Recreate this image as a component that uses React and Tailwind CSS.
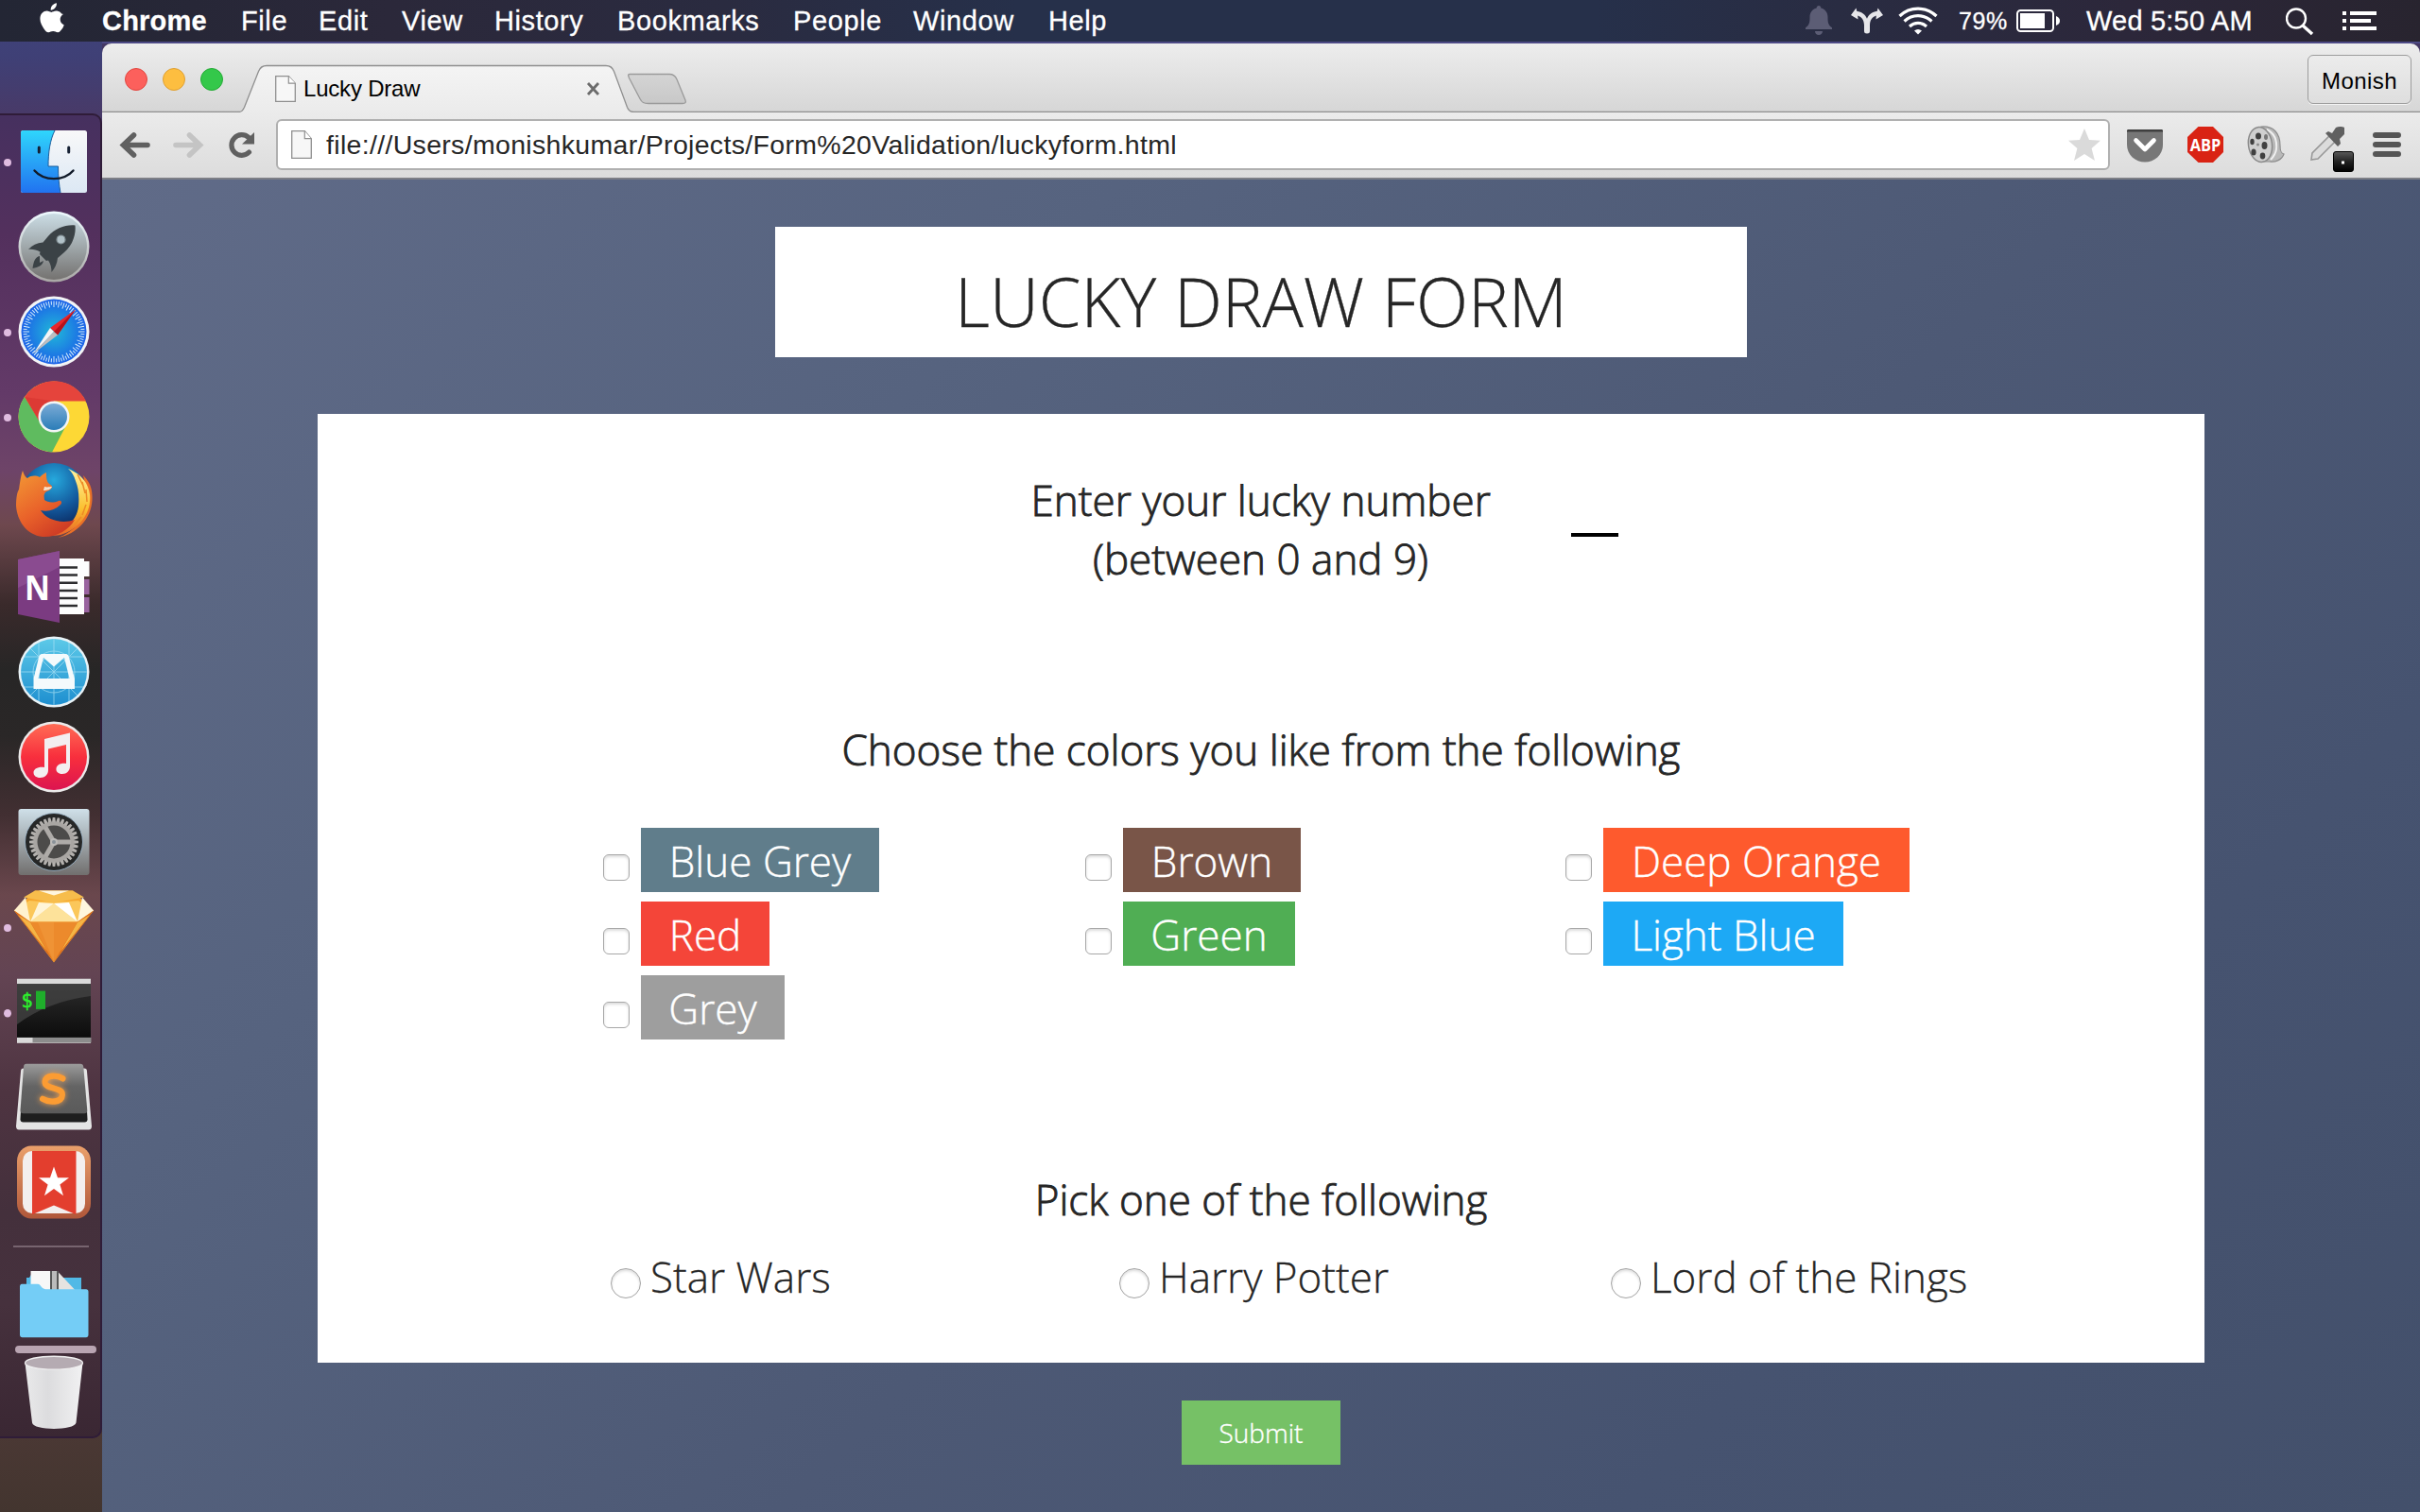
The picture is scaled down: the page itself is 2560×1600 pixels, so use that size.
import React from "react";

const MENUS = [
  ["File", "w-[82px]"],
  ["Edit", "w-[88px]"],
  ["View", "w-[98px]"],
  ["History", "w-[130px]"],
  ["Bookmarks", "w-[186px]"],
  ["People", "w-[127px]"],
  ["Window", "w-[143px]"],
  ["Help", "w-[80px]"],
];

function AppleLogo() {
  return (
    <svg className="ml-[42px] mt-[3px] h-[32px] w-[26px] shrink-0" viewBox="0 0 26 32" fill="#fff">
      <path d="M17.9 0.2c.3 2-.6 4-1.800 5.400-1.200 1.400-2.900 2.300-4.400 2.200-.3-2 .7-4 1.800-5.200C14.700 1.200 16.500.3 17.900.2z" />
      <path d="M25 11.300c-.2.1-3.300 1.900-3.300 5.500 0 4.300 3.900 5.800 4 5.800 0 .1-.6 2.100-2 4.100-1.300 1.800-2.600 3.700-4.600 3.700s-2.500-1.200-4.900-1.200c-2.300 0-3.100 1.200-5 1.200s-3.200-1.700-4.700-3.800C2.800 24.100.4 20.700.4 16.300c0-5.600 3.600-8.500 7.200-8.500 1.900 0 3.500 1.300 4.700 1.300 1.100 0 2.900-1.300 5.100-1.300.8 0 3.800.1 5.700 2.800z" transform="translate(0 .8)" />
    </svg>
  );
}

function MenuBar() {
  return (
    <div className="flex h-[44px] items-start bg-[linear-gradient(90deg,#232634_0%,#2b283a_16%,#2a2b40_30%,#26304a_42%,#26304a_66%,#292c42_76%,#2c273a_88%,#28242f_100%)] text-[29px] leading-[44px] text-white [-webkit-text-stroke:0.300px_white] [font-family:'Liberation_Sans',sans-serif]">
      <AppleLogo />
      <span className="ml-[40px] w-[147px] font-bold tracking-[0.2px]">Chrome</span>
      {MENUS.map(([m, w]) => (
        <span key={m} className={w + " shrink-0 tracking-[0.6px]"}>{m}</span>
      ))}
      <div className="ml-auto flex h-[44px] items-center pr-[46px]">
        <svg className="mr-[20px] h-[44px] w-[28px]" viewBox="1910 0 28 44" fill="#5c5d75">
          <path d="M1924 6c1.500 0 2.300 1 2.300 2.400 4.500 1.200 7.200 4.600 7.200 9.600 0 6 .5 8.500 4.500 11.300V31h-28v-1.700c4-2.800 4.500-5.300 4.500-11.300 0-5 2.700-8.400 7.200-9.600 0-1.400.8-2.400 2.300-2.400zM1920 33h8c0 2.500-1.800 4-4 4s-4-1.500-4-4z" />
        </svg>
        <svg className="mr-[16px] h-[44px] w-[34px]" viewBox="1958 0 34 44" fill="#e6e6ea">
          <path d="M1958 16l5.500-7.500.7 3.200c5.500.8 9 3.600 10.800 8 1.800-4.400 5.300-7.200 10.800-8l.7-3.200L1992 16l-7.500 4.500.3-4c-4.600 1.500-6.600 5-6.800 10V33a3 2.500 0 0 1-6 0v-6.500c-.2-5-2.200-8.500-6.800-10l.3 4z" />
        </svg>
        <svg className="mr-[22px] h-[44px] w-[42px]" viewBox="2008 0 42 44" fill="none" stroke="#fff" strokeWidth="3.200">
          <path d="M2009.500 17c11-10.500 28-10.500 39 0M2014.500 22.500c8.500-7.800 20.500-7.800 29 0M2020 28c5.500-4.800 12.500-4.800 18 0" />
          <path d="M2025 32.500c2.500-2 5.500-2 8 0l-4 4z" fill="#fff" stroke="none" />
        </svg>
        <span className="w-[61px] shrink-0 text-[25px] leading-[42px] tracking-[0.6px]">79%</span>
        <svg className="mr-[28px] h-[44px] w-[46px]" viewBox="2133 0 46 44">
          <rect x="2134" y="11" width="38" height="22" rx="3.500" fill="none" stroke="#fff" strokeWidth="2" />
          <rect x="2137" y="14" width="26" height="16" fill="#fff" />
          <path d="M2175 17c3 1 4 3 4 5s-1 4-4 5z" fill="#fff" />
        </svg>
        <span className="w-[211px] shrink-0 tracking-[0.2px]">Wed 5:50 AM</span>
        <svg className="mr-[30px] h-[44px] w-[30px]" viewBox="2418 0 30 44" fill="none" stroke="#fff" strokeWidth="2.400">
          <circle cx="2429" cy="19.500" r="10" />
          <path d="M2436 27l10 9" strokeWidth="3.400" />
        </svg>
        <svg className="h-[44px] w-[36px]" viewBox="2478 0 36 44" fill="#fff">
          <path d="M2478 12h4v4h-4zM2478 20h4v4h-4zM2478 28h4v4h-4zM2486 12h28v4h-28zM2486 20h22v4h-22zM2486 28h28v4h-28z" />
        </svg>
      </div>
    </div>
  );
}

/* ---------- Dock ---------- */

function Slot({ y, h, dot, children, cls = "h-[90px]" }) {
  return (
    <svg className={cls + " block w-[106px] shrink-0 overflow-visible"} viewBox={`0 ${y} 106 ${h}`} preserveAspectRatio="none">
      {dot && <circle cx="8" cy={dot} r="4" fill="#e0bce0" />}
      {children}
    </svg>
  );
}

const radial = (n, fn) => Array.from({ length: n }, (_, i) => fn((i * 360) / n, i));

function Dock() {
  return (
    <div className="mt-[76px] flex h-[1402px] w-[108px] flex-col rounded-r-[10px] border-y-2 border-r-2 border-[#2f1c38] bg-[linear-gradient(180deg,#46305f_0%,#53305d_9%,#633a68_21%,#6e4468_27%,#6e484e_31%,#3a2a2b_37%,#272626_42%,#2a2727_47%,#422f32_53%,#6a474d_59%,#634453_65%,#4e3441_74%,#44303c_83%,#46313d_90%,#3a2733_100%)] pt-[4px]">
      <Slot y={126} h={90} dot={172}>
        <defs>
          <linearGradient id="fin" x1="0" y1="0" x2="0" y2="1"><stop offset="0" stopColor="#2fd6fc" /><stop offset="1" stopColor="#2172f0" /></linearGradient>
          <linearGradient id="fin2" x1="0" y1="0" x2="0" y2="1"><stop offset="0" stopColor="#f8f8f9" /><stop offset="1" stopColor="#dce8f4" /></linearGradient>
        </defs>
        <rect x="22" y="138" width="70" height="66" rx="2.500" fill="url(#fin2)" />
        <path d="M24.500 138H58c-5 10-7 23-7 38h10.500c0 11 1 20 2.500 28H24.500a2.500 2.500 0 0 1-2.500-2.500v-61a2.500 2.500 0 0 1 2.500-2.500z" fill="url(#fin)" />
        <path d="M58 138c-5 10-7 23-7 38h10.500c0 11 1 20 2.500 28" fill="none" stroke="#1b5d9c" strokeWidth="1" />
        <path d="M41.300 156v5M72.700 156v5" stroke="#152033" strokeWidth="3" strokeLinecap="round" />
        <path d="M36.500 180.500c10 11.500 31 11.500 41 0" fill="none" stroke="#111a28" strokeWidth="2.400" strokeLinecap="round" />
      </Slot>
      <Slot y={216} h={90}>
        <defs><linearGradient id="lp" x1="0" y1="0" x2="0" y2="1"><stop offset="0" stopColor="#cbdde5" /><stop offset="1" stopColor="#747270" /></linearGradient>
          <linearGradient id="lp2" x1="0" y1="0" x2="0" y2="1"><stop offset="0" stopColor="#eefaff" /><stop offset="1" stopColor="#a9a7a5" /></linearGradient></defs>
        <circle cx="57" cy="261" r="37.500" fill="url(#lp2)" />
        <circle cx="57" cy="261" r="35" fill="url(#lp)" />
        <path d="M79.500 238.500c1 9-2 20-11.500 28.500l-7 6c-.500 6-3 11-6.500 15 0-5-1-9-3.500-12.500l-2 .500-7-7 .500-2.500c-4-2-8-3-12.500-2.500 4-4.500 9-7 15.500-7.500l5-6c8-9 19-13 29-12z" fill="#3b4246" />
        <path d="M42 271c-5 1-6.500 6-7.500 13 6-1 10.500-3 11.500-8l-4 2z" fill="#3b4246" />
        <circle cx="64.500" cy="253.500" r="4.500" fill="#b2c2c8" stroke="#7e8b90" strokeWidth="1.200" />
      </Slot>
      <Slot y={306} h={90} dot={352}>
        <defs><radialGradient id="saf"><stop offset="0" stopColor="#20b9d8" /><stop offset="1" stopColor="#1c62e8" /></radialGradient></defs>
        <circle cx="57" cy="351" r="37.500" fill="#f3f4f6" />
        <circle cx="57" cy="351" r="34.500" fill="url(#saf)" />
        {radial(72, (a, i) => (
          <path key={i} d={i % 2 ? "M57 318.500v4" : "M57 318.500v6.500"} stroke="#d5ecfb" strokeWidth="1" transform={`rotate(${a} 57 351)`} />
        ))}
        <path d="M80 327.500L53 347l8 7.500z" fill="#e9262b" />
        <path d="M80 327.500L57 351l4 3.500z" fill="#b5121b" />
        <path d="M35 374.500L53 347l4 4z" fill="#f5f5f5" />
        <path d="M35 374.500L57 351l4 3.500z" fill="#bdbdbf" />
      </Slot>
      <Slot y={396} h={90} dot={442}>
        <circle cx="57" cy="441" r="37.500" fill="#fdd835" />
        <path d="M57 441L26 420A37.500 37.500 0 0 1 91 424.500H57z" fill="#e5443c" />
        <path d="M26 420A37.500 37.500 0 0 0 55 478.500L69 452 57 441 41 444z" fill="#5fbb5f" />
        <path d="M26 420L41 445l12-14 4-6.500z" fill="#dc3a34" />
        <circle cx="57" cy="441" r="16.500" fill="#f3f5f6" />
        <defs><linearGradient id="chb" x1="0" y1="0" x2="0" y2="1"><stop offset="0" stopColor="#7cabd6" /><stop offset="1" stopColor="#2b7db8" /></linearGradient></defs>
        <circle cx="57" cy="441" r="14" fill="url(#chb)" />
      </Slot>
      <Slot y={486} h={90}>
        <defs>
          <radialGradient id="ffb" cx=".5" cy=".25" r=".7"><stop offset="0" stopColor="#26a9dd" /><stop offset=".6" stopColor="#13589c" /><stop offset="1" stopColor="#0b2b62" /></radialGradient>
          <linearGradient id="ffo" x1="0" y1="0" x2=".6" y2="1"><stop offset="0" stopColor="#f39a35" /><stop offset=".6" stopColor="#e9622a" /><stop offset="1" stopColor="#d03e25" /></linearGradient>
          <linearGradient id="ffy" x1="0" y1="0" x2="0" y2="1"><stop offset="0" stopColor="#fff3a0" /><stop offset=".6" stopColor="#fbc02f" /><stop offset="1" stopColor="#e9622a" /></linearGradient>
        </defs>
        <circle cx="57" cy="526" r="36" fill="url(#ffb)" />
        <path d="M88 503c7 7 10 14 9.500 26-1 20-16 36-36 40 18-7 27-19 29-34 1-12 0-23-2.500-32z" fill="#ea7027" />
        <path d="M72 496c13 5 21 14 23 27 2 18-9 36-31 43-8 2-16 0-20-4 20 2 37-8 39-26 1-11 0-20-3-27-2-6-4-10-8-13z" fill="url(#ffy)" />
        <path d="M82 502l6 12M87 510l3 12M91 518l1 13M91 534l-4 11M86 547l-8 9" stroke="#ee8b25" strokeWidth="1.500" fill="none" />
        <path d="M24 498c1 4 3 7 5 8 4-3 9-3 13-1 2-2 4-4 7-5 0 4 0 8 2 11 2 2 5 3 4 5-2 4-7 3-8 7-1 2 0 4 0 6 3 2 8 4 15 1 3-1 4 2 2 4-6 6-14 8-21 6 6 10 22 15 36 10-6 11-20 19-34 18-17-2-27-17-28-33 0-8 1-14 3-17 1-7 2-15 4-20z" fill="url(#ffo)" />
        <path d="M47 515c3 1 6 0 8 0-1 3-5 4-9 4z" fill="#f6e3cf" />
      </Slot>
      <Slot y={576} h={90}>
        <path d="M60 591h29v3h5.500v16H89v40H60z" fill="#fdfdfd" />
        <path d="M89 613h5.500v16H89zM89 632h5.500v16H89z" fill="#99639f" />
        <path d="M62 600.500h20M62 608.500h20M62 616.800h20M62 625h20M62 633h20M62 641h20" stroke="#2c2c2e" strokeWidth="2.600" />
        <path d="M63 583l-44 9v58l44 9z" fill="#7b3b81" />
        <path d="M63 583l-44 9v30l44-22z" fill="#8a4b90" />
        <text x="26" y="634.500" fill="#fff" className="text-[36px] font-bold [font-family:'Open_Sans',sans-serif]" textLength="27" lengthAdjust="spacingAndGlyphs">N</text>
      </Slot>
      <Slot y={666} h={90}>
        <defs><linearGradient id="mb" x1="0" y1="0" x2="0" y2="1"><stop offset="0" stopColor="#5cc9e8" /><stop offset="1" stopColor="#1e8fd0" /></linearGradient></defs>
        <circle cx="57" cy="711" r="37.500" fill="#e9f3f7" />
        <circle cx="57" cy="711" r="35" fill="url(#mb)" />
        <g fill="none" stroke="#a8e0f4" strokeWidth=".9" opacity=".8">
          <circle cx="57" cy="711" r="22" /><circle cx="57" cy="711" r="17" />
          <path d="M22 711h70M57 676v70M32 686l50 50M82 686l-50 50M41 680v62M73 680v62M26 695h62M26 727h62" />
        </g>
        <path fillRule="evenodd" d="M44 692h26c1 0 2 1 2.500 2L79 718v11H35.500v-11L41.500 694c.5-1 1.500-2 2.500-2zM46 696l-5.500 22h33L68 696l-11 9.500z" fill="#f4fafc" />
      </Slot>
      <Slot y={756} h={90}>
        <defs><linearGradient id="it" x1="0" y1="0" x2="0" y2="1"><stop offset="0" stopColor="#ff6c55" /><stop offset=".5" stopColor="#f82f3d" /><stop offset="1" stopColor="#dc1450" /></linearGradient></defs>
        <circle cx="57" cy="801" r="37.500" fill="#eceaea" />
        <circle cx="57" cy="801" r="35" fill="url(#it)" />
        <path d="M47 782l27-6.500V811c0 4.500-3.500 8-8 8s-7-2.500-6.500-6 5-6 10.500-5v-20l-19 4.500V815c0 4.500-3.500 8-8.500 8-4.500 0-7-2.500-7-5.500 0-4 5-6.500 11.500-5.500z" fill="#f3eef0" />
      </Slot>
      <Slot y={846} h={90}>
        <defs><linearGradient id="sp" x1="0" y1="0" x2="0" y2="1"><stop offset="0" stopColor="#cfe0e9" /><stop offset="1" stopColor="#716f6e" /></linearGradient></defs>
        <rect x="19.500" y="856" width="75" height="70" rx="3" fill="url(#sp)" />
        <circle cx="57" cy="891" r="30.500" fill="#262727" stroke="#a3bdd0" strokeWidth=".8" />
        {radial(32, (a, i) => (
          <path key={i} d="M55.700 865h2.600l.8 6h-4.200z" fill="#b4b1ae" transform={`rotate(${a} 57 891)`} />
        ))}
        <circle cx="57" cy="891" r="19.500" fill="#4c4b4a" stroke="#a9a6a3" strokeWidth="4" />
        {radial(3, (a, i) => (
          <path key={i} d="M57 888.500h18v5H57z" fill="#aeaba8" transform={`rotate(${a} 57 891)`} />
        ))}
        <circle cx="57" cy="891" r="4" fill="#bcbab8" /><circle cx="57" cy="891" r="2" fill="#8a9299" />
      </Slot>
      <Slot y={936} h={89} dot={982} cls="h-[89px]">
        <path d="M37 942.500h40l22 21-42 55-42-55z" fill="#f5a62d" />
        <path d="M15 963.500l16-10.500 26 2 26-2 16 10.500-17 12H32z" fill="#fbc75a" />
        <path d="M37 942.500h40l12 7-32 6-32-6z" fill="#f7bd4c" />
        <path d="M41 942.500h32l-16 5z" fill="#fff6df" />
        <path d="M15 963.500l12-14 5 26z" fill="#fff2cf" /><path d="M99 963.500l-12-14-5 26z" fill="#fff6dd" />
        <path d="M57 956L32 975.500h50z" fill="#fde29a" />
        <path d="M57 956l-16-1-9 20.500z" fill="#fff5d8" /><path d="M57 956l16-1 9 20.500z" fill="#fff" />
        <path d="M32 975.500h50L57 1018z" fill="#ec8a2c" />
        <path d="M15 963.500l17 12 25 42.500z" fill="#dd6a1b" /><path d="M99 963.500l-17 12-25 42.500z" fill="#dd6a1b" />
        <path d="M19 968l13 8 18 31zM95 968l-13 8-18 31z" fill="#f5b545" />
        <path d="M40 976l17 42 0-42z" fill="#f29a3c" opacity=".6" />
      </Slot>
      <Slot y={1026} h={90} dot={1070} cls="h-[96.500px]">
        <defs><linearGradient id="tm" x1="0" y1="0" x2="0" y2="1"><stop offset="0" stopColor="#2c2c2c" /><stop offset="1" stopColor="#0c0c0c" /></linearGradient></defs>
        <rect x="18" y="1036" width="78" height="63.500" fill="#d9d9d9" />
        <rect x="18" y="1041" width="78" height="53" fill="url(#tm)" />
        <path d="M18 1041h78v12c-30 4-55 12-78 28z" fill="#444" opacity=".75" />
        <path d="M34.500 1094h62v5h-62z" fill="#8c8c8c" />
        <text x="22.500" y="1064" fill="#2cf02c" stroke="#2cf02c" strokeWidth=".5" className="text-[20px] [font-family:'DejaVu_Sans_Mono',monospace]">$</text>
        <rect x="38" y="1048" width="10" height="18" fill="#1fae2b" />
      </Slot>
      <Slot y={1116} h={76} cls="h-[81.500px]">
        <defs><linearGradient id="su" x1="0" y1="0" x2="0" y2="1"><stop offset="0" stopColor="#9c9c9c" /><stop offset=".45" stopColor="#646464" /><stop offset="1" stopColor="#5a5a5a" /></linearGradient></defs>
        <path d="M25 1124h64c2 0 3 1 3 3l5 54c0 2-1 3.500-3 3.500H20c-2 0-3-1.500-3-3.500l5-54c0-2 1-3 3-3z" fill="#e4e4e4" />
        <path d="M22 1166h70l.5 8c0 2-1 3-3 3h-65c-2 0-3-1-3-3z" fill="#1e1e1e" />
        <path d="M28 1119.500h57c2 0 3 1 3.300 3l4 43c0 2-1 3-3 3H24.500c-2 0-3-1-3-3l3.500-43c.2-2 1-3 3-3z" fill="url(#su)" />
        <path d="M66.500 1134c-6-3.500-18-4-19 3-1 8 19 5 18.500 13-.5 8-14 8-21 4" fill="none" stroke="#fb9c33" strokeWidth="6" strokeLinecap="round" className="drop-shadow-[0_0_3px_#f0a050]" />
      </Slot>
      <Slot y={1192} h={90} cls="h-[96px]">
        <defs><linearGradient id="wu" x1="0" y1="0" x2="0" y2="1"><stop offset="0" stopColor="#eaa06b" /><stop offset="1" stopColor="#b0573a" /></linearGradient></defs>
        <rect x="18" y="1201" width="78" height="72" rx="15" fill="url(#wu)" />
        <rect x="24" y="1206" width="66" height="62" rx="10" fill="#f3efee" />
        <path d="M34 1206h46.500v63L57 1260l-23 9z" fill="#e33e2e" />
        <path d="M57 1221.500l4 11h12l-9.600 6.800 3.600 11-10-6.800-10 6.800 3.600-11-9.600-6.800h12z" fill="#fff" />
      </Slot>
      <div className="mt-[19px] ml-[14px] h-[2px] w-[80px] shrink-0 bg-[#77646f]" />
      <Slot y={1301} h={94} cls="h-[100px]">
        <path d="M28 1331h3l2-3h27v3h26v14H28z" fill="#51b9e6" />
        <path d="M32.500 1324.500H53v22H32.500z" fill="#f7f7f7" /><path d="M53 1324.500h9v22h-9z" fill="#555" /><path d="M55 1324.500h5v22h-5z" fill="#bbb" />
        <path d="M62 1326l18 18H62z" fill="#e5e3e0" />
        <path d="M23 1337.500h17c3 0 4 5 8 5h43c1.500 0 2.500 1 2.500 2.500v43c0 1.500-1 2.500-2.500 2.500H23.500c-1.500 0-2.500-1-2.500-2.500v-48c0-1.500 1-2.500 2-2.500z" fill="#74cdf6" />
      </Slot>
      <div className="mt-[4px] ml-[16px] h-[8px] w-[86px] shrink-0 rounded-full bg-[#b9a5b2]" />
      <Slot y={1406} h={82} cls="h-[88px]">
        <defs><linearGradient id="tr"><stop offset="0" stopColor="#e9e9ea" /><stop offset=".4" stopColor="#dcdcde" /><stop offset="1" stopColor="#f1f1f2" /></linearGradient></defs>
        <path d="M26.500 1415.500l7.500 59c1 8 45 8 46.500 0l7-59z" fill="url(#tr)" />
        <ellipse cx="57" cy="1415.500" rx="30.500" ry="6.500" fill="#b5abb2" stroke="#f0eff0" strokeWidth="1.300" />
      </Slot>
    </div>
  );
}

/* ---------- Browser chrome ---------- */

function PageIcon({ cls }) {
  return (
    <svg className={cls} viewBox="0 0 22 30" preserveAspectRatio="none">
      <path d="M.700.700h13.600l7 8v20.600H.700z" fill="#f7f7f7" stroke="#8f8f8f" strokeWidth="1.300" />
      <path d="M14.300.700v8h7" fill="#fff" stroke="#8f8f8f" strokeWidth="1.200" />
    </svg>
  );
}

function TabStrip() {
  return (
    <div className="relative flex h-[73px] bg-[linear-gradient(180deg,#ededed,#d6d6d6)]">
      <div className="flex gap-[16px] pt-[26px] pl-[24px]">
        <span className="size-[24px] rounded-full border border-[#e2463f] bg-[#fc605c]" />
        <span className="size-[24px] rounded-full border border-[#dfa033] bg-[#fdbe40]" />
        <span className="size-[24px] rounded-full border border-[#24ab35] bg-[#34c84a]" />
      </div>
      <svg className="absolute inset-0 h-[73px] w-[2452px]" viewBox="108 46 2452 73">
        <defs>
          <linearGradient id="tab" x1="0" y1="0" x2="0" y2="1"><stop offset="0" stopColor="#f4f4f4" /><stop offset="1" stopColor="#ebebeb" /></linearGradient>
          <linearGradient id="nt" x1="0" y1="0" x2="0" y2="1"><stop offset="0" stopColor="#d4d4d4" /><stop offset="1" stopColor="#c8c8c8" /></linearGradient>
        </defs>
        <path d="M108 118.500H252c4 0 5-2 6.500-5l15-38c1.500-4 3.500-6 8.500-6H641c5 0 7 2 8.500 6l14 38c1.200 3 3 5 7 5H2560V120H108z" fill="url(#tab)" stroke="#8f8f8f" strokeWidth="1.300" />
        <path d="M666 78.500h42c4 0 6.500 2 8 5.500l9 22c1 2.500 0 3.500-3 3.500h-36c-5 0-7-1-9-5l-11.500-22c-1-2.500-1.500-4 .5-4z" fill="url(#nt)" stroke="#9a9a9a" strokeWidth="1.300" />
        <path d="M622 88l11 12M633 88l-11 12" stroke="#6b6b6b" strokeWidth="2.800" />
      </svg>
      <div className="relative flex pl-[55px] text-[24px] leading-[28px] text-black">
        <PageIcon cls="mt-[34px] h-[28px] w-[22px]" />
        <span className="mt-[34px] ml-[8px] tracking-[-0.2px]">Lucky Draw</span>
      </div>
      <div className="relative mt-[12px] mr-[9px] ml-auto flex h-[52px] w-[110px] justify-center rounded-[6px] border border-[#9d9d9d] bg-[linear-gradient(180deg,#ececec,#dedede)] text-[24px] leading-[53px] tracking-[0.4px] text-black shadow-[0_1px_0_#f3f3f3]">
        Monish
      </div>
    </div>
  );
}

function Toolbar() {
  return (
    <div className="flex h-[71px] border-b-2 border-[#7d7f86] bg-[linear-gradient(180deg,#ebebeb,#dcdcdc)]">
      <svg className="h-[70px] w-[184px] shrink-0" viewBox="108 119 184 70" fill="none" strokeLinecap="round">
        <path d="M156 153.500h-24M141.500 143l-11 10.500 11 10.500" stroke="#606060" strokeWidth="5.600" />
        <path d="M186 153.500h24M200.500 143l11 10.500-11 10.500" stroke="#c4c4c4" strokeWidth="5.600" />
        <path d="M263.500 161a10.800 10.800 0 1 1-.5-15.500" stroke="#606060" strokeWidth="5.200" />
        <path d="M269 140v12.500h-13z" fill="#606060" />
      </svg>
      <div className="mt-[7px] flex h-[54px] w-[1940px] shrink-0 rounded-[6px] border-2 border-[#b0b0b0] bg-white">
        <PageIcon cls="mt-[10px] ml-[14px] h-[30px] w-[22px]" />
        <span className="ml-[15px] text-[28.500px] leading-[51px] tracking-[0.320px] whitespace-nowrap text-[#262626]">
          file:///Users/monishkumar/Projects/Form%20Validation/luckyform.html
        </span>
        <svg className="mt-[8px] mr-[8px] ml-auto size-[34px]" viewBox="0 0 34 34" fill="#dadada">
          <path d="M17 0l5 12 12 .8-9.400 8.200L28 34l-11-7-11 7 3.400-13L0 12.800 12 12z" />
        </svg>
      </div>
      <svg className="h-[70px] w-[328px] shrink-0" viewBox="2232 119 328 70">
        <path d="M2250 139c0-1.500.8-2 2-2h34c1.200 0 2 .5 2 2v14c0 11-9 18.500-19 18.500s-19-7.500-19-18.500z" fill="#777" />
        <path d="M2250 139.500v-1c0-1 .8-1.500 2-1.500h34c1.200 0 2 .5 2 1.500v1z" fill="#3f3f3f" />
        <path d="M2259.500 148.500l9.500 9.500 9.500-9.500" fill="none" stroke="#fff" strokeWidth="4.600" strokeLinecap="round" strokeLinejoin="round" />
        <path d="M2325.500 134h15.500l11 11v16l-11 11h-15.500l-11.500-11v-16z" fill="#d92314" />
        <text x="2316.800" y="159.500" textLength="32.500" lengthAdjust="spacingAndGlyphs" fill="#fff" className="text-[18px] font-bold [font-family:'Open_Sans',sans-serif]">ABP</text>
        <path d="M2392 134c13-1 20 7 20 20 0 6 1 8 4 9-2 6-9 9-15 8h-8z" fill="#b9b9b9" stroke="#8d8d8d" strokeWidth="1.200" />
        <path d="M2398 137c8 4 11 11 10 21-1 5-3 8-6 11" stroke="#efefef" strokeWidth="2" fill="none" />
        <ellipse cx="2391" cy="153" rx="12.500" ry="18.500" fill="#cfcfcf" stroke="#8a8a8a" strokeWidth="1.500" transform="rotate(-8 2391 153)" />
        <g fill="#404040"><ellipse cx="2389" cy="144" rx="3" ry="3.500" /><ellipse cx="2397" cy="145" rx="2" ry="3" fill="#777" /><ellipse cx="2395.500" cy="154" rx="3" ry="4" /><ellipse cx="2382.500" cy="150" rx="2.200" ry="3.200" /><ellipse cx="2384" cy="161" rx="2.600" ry="3.500" /><ellipse cx="2393.500" cy="165" rx="2.800" ry="3.400" /><circle cx="2388.500" cy="153" r="1.500" fill="#888" /></g>
        <path d="M2445 169l1-7 19-19 6 6-19 19z" fill="#dcdcdc" stroke="#999" strokeWidth="1.600" />
        <path d="M2460 141l3-2 4 2 4-6c3-1.500 7-1 9 0v7l-5 5 1 5-3 3z" fill="#606060" />
        <defs><linearGradient id="bd" x1="0" y1="0" x2="0" y2="1"><stop offset="0" stopColor="#5a5a5a" /><stop offset=".5" stopColor="#222" /><stop offset="1" stopColor="#000" /></linearGradient></defs>
        <rect x="2468.500" y="160.500" width="21" height="21" rx="2.500" fill="url(#bd)" stroke="#000" />
        <rect x="2477" y="170.500" width="3" height="3" fill="#fff" />
        <path d="M2513 143h24M2513 153h24M2513 163h24" stroke="#555" strokeWidth="6" strokeLinecap="round" />
      </svg>
    </div>
  );
}

/* ---------- Form ---------- */

const COLUMNS = [
  ["w-[510px]", [["Blue Grey", "w-[252px] bg-[#607d8b]"], ["Red", "w-[136px] bg-[#f44539]"], ["Grey", "w-[152px] bg-[#9e9e9e]"]]],
  ["w-[508px]", [["Brown", "w-[188px] bg-[#795548]"], ["Green", "w-[182px] bg-[#50ae54]"]]],
  ["w-[400px]", [["Deep Orange", "w-[324px] bg-[#fe5a2d]"], ["Light Blue", "w-[254px] bg-[#1da9f5]"]]],
];

const FILMS = [
  ["Star Wars", "w-[538px]"],
  ["Harry Potter", "w-[520px]"],
  ["Lord of the Rings", "w-[400px]"],
];

function Page() {
  const question = "text-[44px] font-light text-[#262626] [-webkit-text-stroke:0.900px_#262626]";
  return (
    <main className="flex h-[1410px] flex-col items-center bg-[linear-gradient(135deg,#606b88_0%,#56637f_28%,#4d5975_55%,#465370_78%,#43506b_100%)] text-[#262626] [font-family:'Open_Sans',sans-serif]">
      <h1 className="mt-[50px] flex h-[138px] w-[1028px] justify-center bg-white text-[72px] leading-[156px] font-light whitespace-nowrap [-webkit-text-stroke:0.300px_#262626]">
        LUCKY DRAW FORM
      </h1>
      <section className="mt-[60px] flex h-[1004px] w-[1996px] shrink-0 flex-col bg-white">
        <div className="mt-[60px] flex h-[126px] justify-center">
          <div className={question + " ml-[134px] w-[486px] text-center leading-[62px] whitespace-nowrap"}>
            <p>Enter your lucky number</p>
            <p>(between 0 and 9)</p>
          </div>
          <div className="mt-[66px] ml-[85px] h-[4px] w-[50px] bg-black" />
        </div>
        <h3 className={question + " mt-[138px] h-[62px] text-center leading-[62px]"}>
          Choose the colors you like from the following
        </h3>
        <div className="mt-[52px] ml-[302px] flex h-[270px]">
          {COLUMNS.map(([width, rows]) => (
            <div key={width} className={width + " flex flex-col gap-[10px]"}>
              {rows.map(([name, cls]) => (
                <label key={name} className="flex h-[68px]">
                  <span className="mt-[28px] mr-[12px] size-[28px] rounded-[6px] border border-[#a8a8a8] bg-white shadow-[inset_0_2px_3px_#dcdcdc]" />
                  <span className={cls + " flex h-[68px] justify-center text-[44px] leading-[70px] font-light whitespace-nowrap text-white [-webkit-text-stroke:0.400px_white]"}>
                    {name}
                  </span>
                </label>
              ))}
            </div>
          ))}
        </div>
        <h3 className={question + " mt-[92px] h-[62px] text-center leading-[62px]"}>Pick one of the following</h3>
        <div className="mt-[24px] ml-[310px] flex">
          {FILMS.map(([name, w]) => (
            <label key={name} className={w + " flex"}>
              <span className="mt-[18px] mr-[10px] size-[32px] shrink-0 rounded-full border border-[#a4a4a4] bg-white shadow-[inset_0_2px_3px_#dcdcdc]" />
              <span className="text-[44px] leading-[54px] font-light whitespace-nowrap [-webkit-text-stroke:0.300px_#262626]">{name}</span>
            </label>
          ))}
        </div>
      </section>
      <button className="mt-[40px] h-[68px] w-[168px] shrink-0 bg-[#76c166] text-[28px] leading-[66px] font-light text-white [-webkit-text-stroke:0.400px_white]">
        Submit
      </button>
    </main>
  );
}

export default function App() {
  return (
    <div className="h-[1600px] w-[2560px] overflow-hidden bg-[linear-gradient(180deg,#40447c_0px,#3f4076_60px,#483a68_120px,#4a3834_1520px,#43352f_1600px)]">
      <MenuBar />
      <div className="flex h-[1556px]">
        <Dock />
        <div className="flex h-[1556px] w-[2452px] flex-col border-t-2 border-[#4d4a86] bg-[#433763]">
          <div className="flex flex-col overflow-hidden rounded-t-[10px] [font-family:'Liberation_Sans',sans-serif]">
            <TabStrip />
            <Toolbar />
            <Page />
          </div>
        </div>
      </div>
    </div>
  );
}
